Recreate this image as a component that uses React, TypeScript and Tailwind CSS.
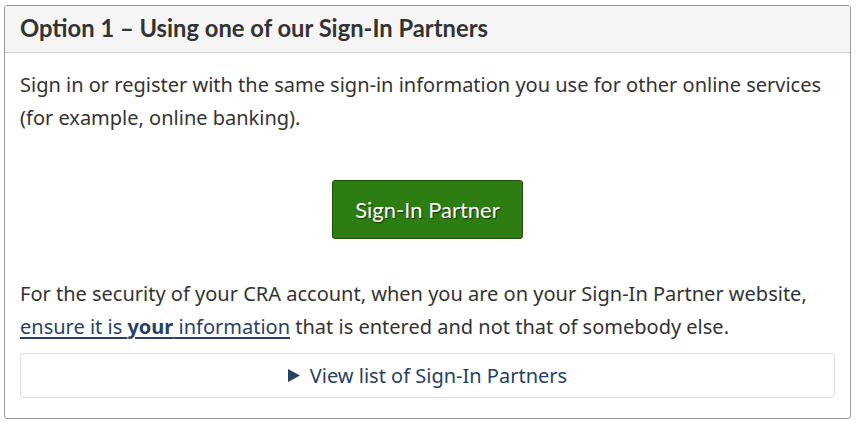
export default function App() {
  return (
    <div className="bg-white w-[856px] h-[425px] pt-[5px] pl-[4px]" style={{ fontFamily: '"Noto Sans", sans-serif' }}>
      <section className="w-[847px] h-[414px] border border-[#999] rounded-[3px] overflow-hidden text-[#333]">
        <header className="h-[47px] bg-[#f5f5f5] border-b border-[#ccc] px-[15px] flex items-center">
          <h3 className="text-[23.75px] font-bold text-[#333] leading-none" style={{ fontFamily: 'Lato, sans-serif' }}>
            Option 1 – Using one of our Sign-In Partners
          </h3>
        </header>
        <div className="px-[15px] pt-[15px] text-[20px] leading-[33px]">
          <p>
            Sign in or register with the same sign-in information you use for other online services (for example,
            online banking).
          </p>
          <div className="flex justify-center mt-[46px]">
            <a
              href="#"
              className="w-[191px] h-[59px] flex items-center justify-center bg-[#2e7d12] border border-[#1b4d0b] rounded-[3px] text-white text-[22px]"
              style={{ fontFamily: 'Lato, sans-serif', textShadow: '1px 1px 1px rgba(0,0,0,0.6)' }}
            >
              Sign-In Partner
            </a>
          </div>
          <p className="mt-[38px]">
            For the security of your CRA account, when you are on your Sign-In Partner website,{' '}
            <a href="#" className="text-[#284162] underline underline-offset-[3px]">
              ensure it is <strong>your</strong> information
            </a>{' '}
            that is entered and not that of somebody else.
          </p>
          <details className="mt-[10px] border border-[#ddd] rounded-[4px]">
            <summary className="h-[43px] flex items-center justify-center list-none text-[#284162] cursor-pointer">
              <svg width="12" height="13" viewBox="0 0 12 13" className="mr-[10px]">
                <path d="M0 0 L12 6.5 L0 13 Z" fill="#284162" />
              </svg>
              View list of Sign-In Partners
            </summary>
          </details>
        </div>
      </section>
    </div>
  );
}
